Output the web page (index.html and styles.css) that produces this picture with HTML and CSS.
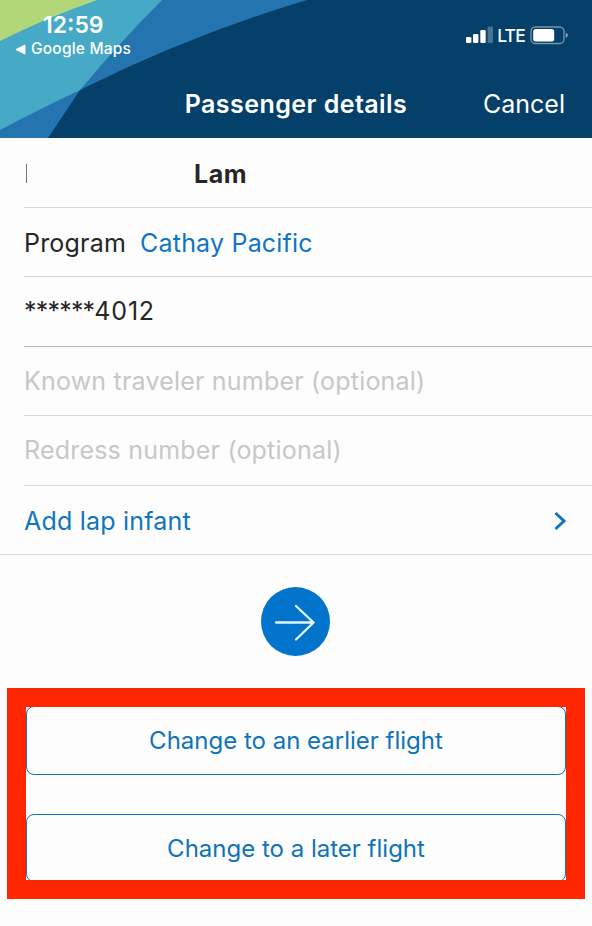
FILE: index.html
```html
<!DOCTYPE html>
<html lang="en">
<head>
  <meta charset="UTF-8">
  <meta name="viewport" content="width=device-width, initial-scale=1.0">
  <title>Passenger details</title>
  <link rel="stylesheet" href="styles.css">
</head>
<body>
  <header class="header">
    <svg class="header-bg" viewBox="0 0 592 138" aria-hidden="true">
      <path fill="#2474b0" d="M0 0H307Q190 35 80 90L48 138H0Z"/>
      <path fill="#46a9c6" d="M0 0H162Q120 42 80 90Q38 110 0 130Z"/>
      <path fill="#b2d77b" d="M0 0H97Q48 17 0 41Z"/>
    </svg>
    <div class="status-bar">
      <div class="status-left">
        <div class="clock">12:59</div>
        <div class="back-app">
          <svg width="11" height="11" viewBox="0 0 11 11"><path d="M1 5.5L10 1V10Z" fill="#fff" stroke="#fff" stroke-linejoin="round"/></svg>
          <span>Google Maps</span>
        </div>
      </div>
      <div class="status-right">
        <svg width="28" height="18" viewBox="0 0 28 18" fill="#fff">
          <rect x="0" y="11" width="5.4" height="6" rx="1.2"/>
          <rect x="7" y="8" width="5.4" height="9" rx="1.2"/>
          <rect x="14.3" y="4" width="5.4" height="13" rx="1.2"/>
          <rect x="21.6" y="0.5" width="5.4" height="16.5" rx="1.2" opacity=".28"/>
        </svg>
        <span class="network">LTE</span>
        <svg width="40" height="19" viewBox="0 0 40 19">
          <rect x="1" y="1" width="33" height="16.5" rx="4.5" fill="none" stroke="#fff" stroke-opacity=".45" stroke-width="1.3"/>
          <rect x="3.2" y="3" width="21" height="12.5" rx="2.5" fill="#fff"/>
          <path d="M35.7 6.5Q38 7.5 38 9.3T35.700 12Z" fill="#fff" opacity=".5"/>
        </svg>
      </div>
    </div>
    <div class="nav-bar">
      <h1>Passenger details</h1>
      <a class="cancel">Cancel</a>
    </div>
  </header>

  <main>
    <div class="rows">
      <div class="row name-row">
        <span class="cursor"></span>
        <span class="last-name">Lam</span>
      </div>
      <div class="row program-row">
        <span>Program</span>
        <span class="program-value">Cathay Pacific</span>
      </div>
      <div class="row number-row"><span class="mask">******</span><span class="digits">4012</span></div>
      <div class="row placeholder">Known traveler number (optional)</div>
      <div class="row placeholder">Redress number (optional)</div>
      <div class="row infant-row">
        <span>Add lap infant</span>
        <svg width="14" height="20" viewBox="0 0 14 20"><path d="M2.5 2L11 10L2.5 18" fill="none" stroke="#0f75bf" stroke-width="3"/></svg>
      </div>
    </div>

    <button class="next" aria-label="Next">
      <svg width="69" height="69" viewBox="0 0 69 69" fill="none" stroke="#e4f6ff" stroke-width="2.3" stroke-linecap="round">
        <path d="M15 35.500H52M35 19L52.500 35.500L35 52.500"/>
      </svg>
    </button>

    <div class="flight-options">
      <button class="option">Change to an earlier flight</button>
      <button class="option">Change to a later flight</button>
    </div>
  </main>
</body>
</html>
```
FILE: styles.css
```css
* {
  box-sizing: border-box;
}
body {
  margin: 0;
  background: #fdfdfd;
  font-family: Inter, "Liberation Sans", sans-serif;
  color: #262626;
  height: 926px;
  overflow: hidden;
}
button {
  font-family: inherit;
  padding: 0;
  border: none;
}
.header {
  position: relative;
  height: 138px;
  background: #04406a;
  color: #fff;
}
.header-bg {
  position: absolute;
  top: 0;
  left: 0;
  width: 592px;
  height: 138px;
}
.status-bar {
  position: relative;
  display: flex;
  justify-content: space-between;
  height: 71px;
  padding: 11px 22px 0 15px;
}
.clock {
  padding-left: 28px;
  font-size: 23px;
  line-height: 28px;
  font-weight: 600;
}
.back-app {
  display: flex;
  align-items: center;
  gap: 5px;
  font-size: 15.5px;
  line-height: 20px;
  font-weight: 500;
  letter-spacing: 0.2px;
}
.status-right {
  display: flex;
  align-items: center;
  height: 20px;
  margin-top: 14px;
}
.network {
  margin: 0 5px 0 3px;
  font-size: 17.5px;
  font-weight: 500;
  letter-spacing: -0.8px;
}
.nav-bar {
  position: relative;
  display: grid;
  grid-template-columns: 1fr auto 1fr;
  align-items: center;
  height: 65px;
  padding: 0 27px;
}
h1 {
  grid-column: 2;
  margin: 0;
  font-size: 25px;
  font-weight: 600;
  letter-spacing: 0.45px;
}
.cancel {
  justify-self: end;
  font-size: 25px;
}
.rows {
  display: flex;
  flex-direction: column;
  border-bottom: 1px solid #d9dadb;
}
.row {
  display: flex;
  align-items: center;
  height: 69.5px;
  margin-left: 24px;
  border-bottom: 1px solid #d9dadb;
  font-size: 25px;
  letter-spacing: 0.2px;
  white-space: nowrap;
}
.name-row {
  padding: 3px 0 0 2px;
}
.program-row {
  padding-top: 2px;
}
.cursor {
  width: 1px;
  height: 19px;
  background: #777;
}
.last-name {
  margin-left: 167px;
  font-weight: 700;
  letter-spacing: 0.6px;
}
.program-value {
  margin-left: 14px;
  color: #0f75c4;
}
.number-row {
  border-bottom-color: #b5b6b7;
}
.mask {
  letter-spacing: -0.8px;
}
.digits {
  letter-spacing: 0.8px;
}
.placeholder {
  color: #c7c7c9;
}
.infant-row {
  justify-content: space-between;
  height: 68.5px;
  padding: 2px 25px 0 0;
  border-bottom: none;
  color: #0f75bf;
}
.next {
  display: block;
  width: 69px;
  height: 69px;
  margin: 32px 0 0 261px;
  border-radius: 50%;
  background: #0274cb;
}
.flight-options {
  display: flex;
  flex-direction: column;
  justify-content: space-between;
  width: 578px;
  height: 211px;
  margin: 32px 0 0 7px;
  border: 19px solid #ff2600;
  overflow: hidden;
}
.option {
  flex: none;
  height: 69px;
  border: 1px solid #1470b5;
  border-radius: 8px;
  background: #fdfdfd;
  color: #0f73b9;
  font-size: 24px;
}
.option:first-child {
  margin-top: -1px;
}
.option:last-child {
  height: 68px;
  margin-bottom: -2px;
}
```
